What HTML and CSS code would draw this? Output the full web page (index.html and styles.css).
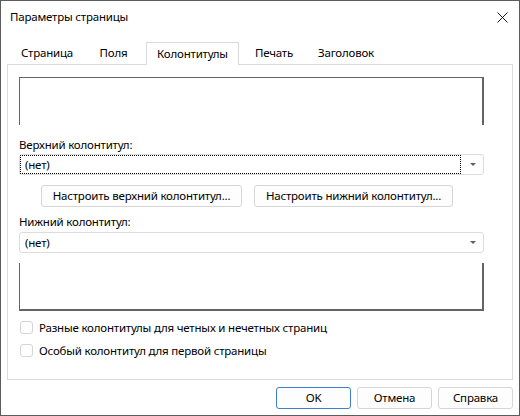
FILE: index.html
```html
<!DOCTYPE html>
<html lang="ru">
<head>
<meta charset="utf-8">
<link rel="stylesheet" href="styles.css">
</head>
<body>
<div class="window">
  <div class="titlebar">
    <span class="title">Параметры страницы</span>
    <svg class="close" width="11" height="11" viewBox="0 0 11 11"><path d="M0.5 0.5L10.5 10.5M10.5 0.5L0.5 10.5" stroke="#1a1a1a" stroke-width="1" fill="none"/></svg>
  </div>
  <div class="tabs">
    <div class="tab t1">Страница</div>
    <div class="tab t2">Поля</div>
    <div class="tab t3 active">Колонтитулы</div>
    <div class="tab t4">Печать</div>
    <div class="tab t5">Заголовок</div>
  </div>
  <div class="panel">
    <div class="preview top"></div>
    <div class="label l1">Верхний колонтитул:</div>
    <div class="combo c1">
      <div class="combo-value focused">(нет)</div>
      <div class="combo-arrow"><span class="tri"></span></div>
    </div>
    <div class="btnrow">
      <div class="btn wide">Настроить верхний колонтитул...</div>
      <div class="btn wide w2">Настроить нижний колонтитул...</div>
    </div>
    <div class="label l2">Нижний колонтитул:</div>
    <div class="combo c2">
      <div class="combo-value">(нет)</div>
      <div class="combo-arrow"><span class="tri"></span></div>
    </div>
    <div class="preview bottom"></div>
    <div class="check ch1"><span class="box"></span><span>Разные колонтитулы для четных и нечетных страниц</span></div>
    <div class="check ch2"><span class="box"></span><span>Особый колонтитул для первой страницы</span></div>
  </div>
  <div class="footer">
    <div class="btn small default">OK</div>
    <div class="btn small">Отмена</div>
    <div class="btn small">Справка</div>
  </div>
</div>
</body>
</html>
```
FILE: styles.css
```css
* { box-sizing: border-box; }
html, body { margin: 0; padding: 0; background: #ffffff; }
body {
  font-family: "Noto Sans", "Open Sans", sans-serif;
  font-size: 11.5px;
  letter-spacing: -0.2px;
  color: #1a1a1a;
}
.window {
  width: 520px;
  height: 416px;
  border: 1px solid #5c5c5c;
  background: #ffffff;
  display: flex;
  flex-direction: column;
}
.titlebar {
  height: 31px;
  display: flex;
  align-items: center;
  justify-content: space-between;
  padding: 0 11px 0 9px;
}
.title { line-height: 16px; color: #000; }
.close { margin-top: 2px; }
.tabs {
  margin-top: 10px;
  margin-left: 12px;
  height: 22px;
  display: flex;
  position: relative;
  z-index: 1;
}
.tab {
  height: 22px;
  line-height: 21px;
  text-align: center;
  color: #000;
}
.t1 { width: 68px; }
.t2 { width: 65px; }
.t3 { width: 93px; }
.t4 { width: 70px; }
.t5 { width: 74px; }
.tab.active {
  height: 23px;
  background: #fff;
  border: 1px solid #dadada;
  border-bottom: none;
  line-height: 21px;
}
.panel {
  margin: 0 6px;
  height: 316px;
  border: 1px solid #dadada;
  padding: 12px 28px 0 11px;
  display: flex;
  flex-direction: column;
}
.preview {
  height: 48px;
  border-left: 1px solid #646464;
  border-right: 2px solid #646464;
}
.preview.top { border-top: 1px solid #646464; }
.preview.bottom { border-bottom: 2px solid #646464; margin-top: 10px; }
.label { height: 16px; line-height: 16px; color: #000; }
.l1 { margin-top: 12px; }
.l2 { margin-top: 7px; }
.combo {
  height: 21px;
  border: 1px solid #dcdcdc;
  border-radius: 3px;
  display: flex;
}
.c1 { margin-top: 1px; }
.c2 { margin-top: 2px; }
.combo-value {
  flex: 1;
  line-height: 19px;
  padding-left: 5px;
  color: #000;
}
.combo-value.focused { border: 1px dotted #000; line-height: 17px; padding-left: 4px; }
.combo-arrow {
  width: 22px;
  display: flex;
  align-items: center;
  justify-content: center;
}
.tri {
  width: 0; height: 0;
  border-left: 3px solid transparent;
  border-right: 3px solid transparent;
  border-top: 3px solid #606060;
  margin-left: 1px;
}
.btnrow {
  margin-top: 10px;
  margin-left: 22px;
  display: flex;
  gap: 12px;
}
.btn {
  height: 22px;
  border: 1px solid #d6d6d6;
  border-radius: 3px;
  background: #fdfdfd;
  text-align: center;
  line-height: 20px;
  color: #000;
}
.btn.wide { width: 201px; }
.btn.wide.w2 { width: 199px; }
.check {
  display: flex;
  align-items: center;
  gap: 6px;
  height: 16px;
  margin-left: 1px;
  color: #000;
}
.ch1 { margin-top: 8px; }
.ch2 { margin-top: 7px; }
.box {
  width: 13px; height: 13px;
  border: 1px solid #d4d4d4;
  border-radius: 3px;
  background: #fff;
}
.footer {
  margin-top: 7px;
  margin-right: 6px;
  display: flex;
  justify-content: flex-end;
  gap: 6px;
}
.btn.small { width: 75px; }
.btn.default { border-color: #3a7fd0; }
```
